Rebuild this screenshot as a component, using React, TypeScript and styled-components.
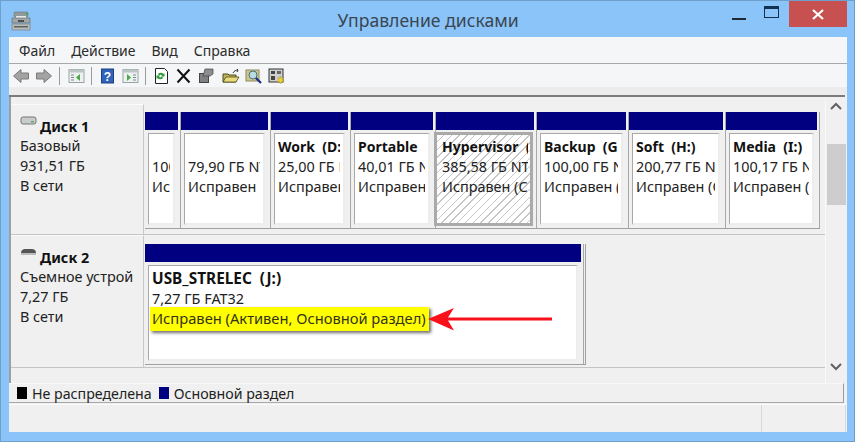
import React from "react";
import styled, { createGlobalStyle } from "styled-components";

const Global = createGlobalStyle`
  html, body { margin: 0; padding: 0; background: #8ac4f9; }
  * { box-sizing: border-box; }
`;

const Window = styled.div`
  width: 855px;
  height: 442px;
  overflow: hidden;
  background: #8ac4f9;
  border: 1px solid #6f9fcb;
  display: flex;
  flex-direction: column;
  font-family: "Noto Sans", "Open Sans", sans-serif;
  color: #222;
`;

const TitleBar = styled.div`
  height: 36px;
  flex: none;
  display: flex;
  padding-left: 10px;
`;

const AppIcon = styled.svg`
  width: 20px;
  height: 20px;
  margin-top: 10px;
  flex: none;
`;

const Title = styled.div`
  flex: 1;
  text-align: center;
  font-size: 17.6px;
  line-height: 38px;
  color: #3b4650;
  padding-left: 103px;
`;

const Controls = styled.div`
  display: flex;
  flex: none;
  margin-right: 7px;
`;

const ControlSlot = styled.div`
  width: 33px;
  height: 26px;
  display: flex;
  align-items: center;
  justify-content: center;
`;

const Minimize = styled.div`
  width: 14px;
  height: 2px;
  background: #1d2a36;
  margin-top: 10px;
`;

const Maximize = styled.div`
  width: 15px;
  height: 12px;
  border: 1px solid #12304f;
  border-top-width: 3px;
  margin-top: -4px;
`;

const Close = styled.div`
  width: 58px;
  height: 26px;
  margin-left: 1px;
  background: #c75050;
  display: flex;
  align-items: center;
  justify-content: center;
`;

const Client = styled.div`
  flex: 1;
  margin: 0 7px 9px 8px;
  background: #f0f0f0;
  display: flex;
  flex-direction: column;
  min-height: 0;
`;

const MenuBar = styled.div`
  height: 27px;
  flex: none;
  background: #f5f6f7;
  border-bottom: 1px solid #a8a8a8;
  display: flex;
  align-items: center;
  padding-left: 10px;
  gap: 16px;
  font-size: 14px;
  color: #2b2b2b;
`;

const MenuItem = styled.span`
  line-height: 27px;
`;

const Toolbar = styled.div`
  height: 23px;
  flex: none;
  background: #f5f6f7;
  display: flex;
  align-items: center;
  padding-left: 3px;
`;

const ToolIcon = styled.svg<{ $gap?: number }>`
  width: 18px;
  height: 16px;
  flex: none;
  margin-right: ${(p) => p.$gap ?? 5}px;
`;

const ToolSep = styled.div`
  width: 1px;
  height: 18px;
  background: #9a9a9a;
  margin: 0 8px 0 1px;
  flex: none;
`;

const Strip = styled.div`
  height: 8px;
  flex: none;
  background: #ececec;
`;

const HeaderLine = styled.div`
  height: 2px;
  flex: none;
  background: #7b7b7b;
  margin-right: 2px;
`;

const ListPane = styled.div`
  height: 286px;
  flex: none;
  display: flex;
  border-left: 2px solid #a0a0a0;
`;

const Rows = styled.div`
  flex: 1;
  min-width: 0;
  display: flex;
  flex-direction: column;
`;

const DiskRow = styled.div<{ $h: number; $pt: number }>`
  height: ${(p) => p.$h}px;
  flex: none;
  display: flex;
  padding-top: ${(p) => p.$pt}px;
  border-bottom: 1px solid #c4c4c4;
`;

const DiskLabel = styled.div<{ $lift: number }>`
  width: 133px;
  flex: none;
  margin-top: -${(p) => p.$lift}px;
  padding: 11px 0 0 9px;
  border-right: 1px solid #c8c8c8;
  border-top: 1px solid #fbfbfb;
  overflow: hidden;
  white-space: nowrap;
  font-size: 14.4px;
  line-height: 20px;
`;

const DiskHead = styled.div`
  display: flex;
  align-items: flex-start;
  height: 20px;
  font-weight: 700;
  font-size: 14.4px;
  color: #111;
`;

const DiskIcon = styled.svg`
  width: 17px;
  height: 12px;
  flex: none;
  margin: 0 3px 0 0;
`;

const DiskName = styled.span`
  margin-top: 1px;
`;

const Partitions = styled.div<{ $w: number; $h: number; $framed?: boolean }>`
  width: ${(p) => p.$w}px;
  height: ${(p) => p.$h}px;
  margin-left: 1px;
  flex: none;
  display: flex;
  border-bottom: 1px solid #a0a0a0;
  border-right: ${(p) => (p.$framed ? "1px solid #a0a0a0" : "none")};
`;

const Partition = styled.div<{ $w: number }>`
  width: ${(p) => p.$w}px;
  flex: none;
  padding-right: 3px;
  display: flex;
  flex-direction: column;
  border-right: 1px solid #a8a8a8;
`;

const PartBar = styled.div`
  height: 18px;
  flex: none;
  background: #000080;
  margin-right: -1px;
`;

const PartBody = styled.div<{ $selected?: boolean }>`
  flex: 1;
  margin: ${(p) => (p.$selected ? "2px 0 2px -2px" : "3px 2px 3px 3px")};
  padding: ${(p) => (p.$selected ? "2px 2px 0 5px" : "3px 3px 0 3px")};
  white-space: pre;
  overflow: hidden;
  font-size: 14.4px;
  line-height: 20px;
  background: ${(p) =>
    p.$selected
      ? "repeating-linear-gradient(135deg, #fff 0 4.5px, #c6c6c6 4.5px 5.5px)"
      : "#fff"};
  border-style: solid;
  border-color: ${(p) =>
    p.$selected ? "#aaa" : "#a8a8a8 #ededed #ededed #a8a8a8"};
  border-width: ${(p) => (p.$selected ? "3px" : "1px 2px 2px 1px")};
  position: relative;
`;

const PartClip = styled.div`
  overflow: hidden;
`;

const PartName = styled.div<{ $wide?: boolean }>`
  font-weight: 700;
  height: 20px;
  font-size: ${(p) => (p.$wide ? 15.4 : 14)}px;
  color: #111;
`;

const Highlight = styled.div`
  position: absolute;
  left: 1px;
  top: 41px;
  width: 279px;
  height: 24px;
  background: #ffff00;
  box-shadow: 2px 2px 3px rgba(60, 60, 60, 0.75);
  font-size: 14.7px;
  line-height: 23px;
  padding-left: 2px;
  color: #33331a;
`;

const Arrow = styled.svg`
  position: absolute;
  left: 279px;
  top: 41px;
  width: 126px;
  height: 24px;
`;

const Scroll = styled.div`
  width: 20px;
  flex: none;
  margin-right: 2px;
  margin-top: 3px;
  border-left: 1px solid #fafafa;
  display: flex;
  flex-direction: column;
  align-items: center;
`;

const ScrollBtn = styled.svg<{ $pt?: number }>`
  width: 12px;
  height: 9px;
  flex: none;
  margin-top: ${(p) => p.$pt ?? 0}px;
`;

const Thumb = styled.div`
  width: 19px;
  height: 61px;
  background: #cdcdcd;
  margin-top: 33px;
  margin-left: 1px;
  flex: none;
`;

const Legend = styled.div`
  height: 20px;
  flex: none;
  border-top: 1px solid #f8f8f8;
  border-bottom: 1px solid #a8a8a8;
  border-right: 1px solid #999;
  margin-right: 3px;
  display: flex;
  align-items: center;
  padding-left: 8px;
  font-size: 14.2px;
  color: #222;
`;

const LegendItem = styled.div`
  display: flex;
  align-items: center;
  margin-right: 7px;
  height: 19px;
  padding-top: 1px;
`;

const Swatch = styled.span<{ $c: string }>`
  width: 10px;
  height: 12px;
  background: ${(p) => p.$c};
  margin-right: 5px;
  margin-top: -2px;
  flex: none;
`;

const StatusBar = styled.div`
  flex: 1;
  border-top: 1px solid #fbfbfb;
  margin-top: 1px;
  display: flex;
  justify-content: flex-end;
`;

const StatusCell = styled.div`
  width: 85px;
  height: 100%;
  border-left: 1px solid #d8d8d8;
  border-right: 1px solid #d8d8d8;
  margin-right: 1px;
`;

const BackIcon = ({ flip }: { flip?: boolean }) => (
  <ToolIcon viewBox="0 0 18 16" $gap={5}>
    <path
      d={flip ? "M1.500 5h7.500V1.500l7.500 6.500-7.500 6.500V11H1.500z" : "M16.500 5H9V1.500L1.500 8 9 14.500V11h7.500z"}
      fill="#a3a3a3"
      stroke="#7a7a7a"
    />
  </ToolIcon>
);

const PaneIcon = ({ right, gap }: { right?: boolean; gap?: number }) => (
  <ToolIcon viewBox="0 0 18 16" $gap={gap}>
    <rect x="1" y="1.500" width="15" height="13" fill="#eef1f1" stroke="#9aa4a4" />
    <rect x="1" y="1.500" width="15" height="3" fill="#bcc6c6" />
    <rect x={right ? 11 : 3} y="6.500" width="3" height="1" fill="#7a8a8a" />
    <rect x={right ? 11 : 3} y="9" width="3" height="1" fill="#7a8a8a" />
    <rect x={right ? 11 : 3} y="11.500" width="3" height="1" fill="#7a8a8a" />
    <path d={right ? "M5 6l4 3.500L5 13z" : "M12 6L8 9.500l4 3.500z"} fill="#4aa84a" />
  </ToolIcon>
);

export default function App() {
  const cells: { w: number; name?: string; size: string; st: string; sel?: boolean }[] = [
    { w: 36, size: "100 МБ NTFS", st: "Исправен" },
    { w: 90, size: "79,90 ГБ NTFS", st: "Исправен" },
    { w: 80, name: "Work  (D:)", size: "25,00 ГБ NTFS", st: "Исправен (Основной)" },
    { w: 85, name: "Portable  (E:)", size: "40,01 ГБ NTFS", st: "Исправен (Основной)" },
    { w: 101, name: "Hypervisor  (F:)", size: "385,58 ГБ NTFS", st: "Исправен (Система)", sel: true },
    { w: 92, name: "Backup  (G:)", size: "100,00 ГБ NTFS", st: "Исправен (Основной)" },
    { w: 97, name: "Soft  (H:)", size: "200,77 ГБ NTFS", st: "Исправен (Основной)" },
    { w: 94, name: "Media  (I:)", size: "100,17 ГБ NTFS", st: "Исправен (Основной)" },
  ];
  return (
    <>
      <Global />
      <Window>
        <TitleBar>
          <AppIcon viewBox="0 0 20 20">
            <rect x="3" y="1" width="14" height="5" rx="1" fill="#8f9a9c" stroke="#6e7678" strokeWidth=".6" />
            <rect x="5" y="5" width="10" height="2" fill="#e8eaea" />
            <rect x="15" y="2" width="2" height="2" fill="#3faa55" />
            <rect x="1" y="7" width="18" height="5" fill="#9ea6a8" stroke="#666" strokeWidth=".6" />
            <rect x="7" y="9" width="6" height="2" fill="#4a4f50" />
            <rect x="1" y="13" width="18" height="6" fill="#b6bcbd" stroke="#777" strokeWidth=".6" />
            <rect x="3" y="15" width="14" height="1.500" fill="#5c6263" />
          </AppIcon>
          <Title>Управление дисками</Title>
          <Controls>
            <ControlSlot><Minimize /></ControlSlot>
            <ControlSlot><Maximize /></ControlSlot>
            <Close>
              <svg width="12" height="11" viewBox="0 0 12 11">
                <path d="M1 1l10 9M11 1L1 10" stroke="#fff" strokeWidth="2.200" />
              </svg>
            </Close>
          </Controls>
        </TitleBar>
        <Client>
          <MenuBar>
            <MenuItem>Файл</MenuItem>
            <MenuItem>Действие</MenuItem>
            <MenuItem>Вид</MenuItem>
            <MenuItem>Справка</MenuItem>
          </MenuBar>
          <Toolbar>
            <BackIcon />
            <BackIcon flip />
            <ToolSep />
            <PaneIcon gap={4} />
            <ToolSep />
            <ToolIcon viewBox="0 0 18 16" $gap={4}>
              <rect x="1.500" y="1" width="12" height="14" fill="#2f62b8" stroke="#1c3f86" />
              <text x="7.500" y="12.500" textAnchor="middle" fontSize="12" fontWeight="700" fill="#fff" fontFamily="Liberation Sans, sans-serif">?</text>
            </ToolIcon>
            <PaneIcon right gap={4} />
            <ToolSep />
            <ToolIcon viewBox="0 0 18 16" $gap={3}>
              <path d="M1.500.5h9l3 3v12h-12z" fill="#fff" stroke="#222" />
              <path d="M4 6a3.500 3.500 0 0 1 5.500 0l1-1v3.500H7l1-1a2 2 0 0 0-3 0zM9 10a3.500 3.500 0 0 1-5.500 0l-1 1V7.500H6l-1 1a2 2 0 0 0 3 0z" fill="#2f9a3a" />
            </ToolIcon>
            <ToolIcon viewBox="0 0 18 16" $gap={3}>
              <path d="M2.500 1.500l12 13M14.500 1.500l-12 13" stroke="#111" strokeWidth="2" />
            </ToolIcon>
            <ToolIcon viewBox="0 0 18 16" $gap={8}>
              <rect x="3" y="5" width="10" height="10" fill="#444" />
              <path d="M4 7h8M4 9h8M4 11h8M4 13h8" stroke="#ddd" strokeWidth=".8" />
              <path d="M9 1h8v5l-3 2H7z" fill="#8e8e8e" stroke="#444" strokeWidth=".7" />
            </ToolIcon>
            <ToolIcon viewBox="0 0 18 16">
              <path d="M1 6h5l1 1h7v7H1z" fill="#bdb55a" stroke="#4c4a20" />
              <path d="M4 9h13l-3 5H1z" fill="#e9dc7c" stroke="#4c4a20" strokeWidth=".8" />
              <path d="M11 5c1-2 3-3 5-3l-1-1M16 2l-1 2" stroke="#333" fill="none" />
            </ToolIcon>
            <ToolIcon viewBox="0 0 18 16">
              <rect x="1" y="2" width="13" height="11" fill="#cfc68c" stroke="#8a8a60" />
              <circle cx="8" cy="7" r="4" fill="#b8dbe0" stroke="#4a7080" />
              <path d="M11 10l5 5" stroke="#1c2c8a" strokeWidth="2.200" />
            </ToolIcon>
            <ToolIcon viewBox="0 0 18 16">
              <rect x="1" y="1" width="14" height="13" fill="#cfcfcf" stroke="#333" />
              <rect x="3" y="3" width="4" height="3" fill="#444" />
              <rect x="9" y="3" width="4" height="3" fill="#666" />
              <rect x="3" y="8" width="4" height="4" fill="#444" />
              <path d="M12 8l1.200 2.300 2.600-.6-1.300 2.300 1.800 1.800-2.600-.1-1.100 2.200-1.100-2.200-2.600.1 1.800-1.800-1.300-2.300 2.600.6z" fill="#f2d335" stroke="#9a8520" strokeWidth=".4" />
            </ToolIcon>
          </Toolbar>
          <Strip />
          <HeaderLine />
          <ListPane>
            <Rows>
              <DiskRow $h={138} $pt={15}>
                <DiskLabel $lift={8}>
                  <DiskHead>
                    <DiskIcon viewBox="0 0 17 12">
                      <rect x="1" y="1" width="15" height="7" rx="2" fill="#c9cccc" stroke="#777" />
                      <rect x="11" y="5" width="3" height="1.400" fill="#5aa85a" />
                    </DiskIcon>
                    <DiskName>Диск 1</DiskName>
                  </DiskHead>
                  <div>Базовый</div>
                  <div>931,51 ГБ</div>
                  <div>В сети</div>
                </DiskLabel>
                <Partitions $w={675} $h={117}>
                  {cells.map((c, i) => (
                    <Partition key={i} $w={c.w}>
                      <PartBar />
                      <PartBody $selected={c.sel}>
                        <PartClip>
                          <PartName>{c.name ?? "\u00a0"}</PartName>
                          <div>{c.size}</div>
                          <div>{c.st}</div>
                        </PartClip>
                      </PartBody>
                    </Partition>
                  ))}
                </Partitions>
              </DiskRow>
              <DiskRow $h={133} $pt={9}>
                <DiskLabel $lift={9}>
                  <DiskHead>
                    <DiskIcon viewBox="0 0 17 12">
                      <path d="M1 6c0-3 2-4 4-4h7c2 0 4 1 4 4z" fill="#555" />
                      <rect x="1" y="6" width="15" height="2" fill="#bbb" />
                    </DiskIcon>
                    <DiskName>Диск 2</DiskName>
                  </DiskHead>
                  <div>Съемное устрой</div>
                  <div>7,27 ГБ</div>
                  <div>В сети</div>
                </DiskLabel>
                <Partitions $w={441} $h={121} $framed>
                  <Partition $w={439}>
                    <PartBar />
                    <PartBody>
                      <PartName $wide>USB_STRELEC  (J:)</PartName>
                      <div>7,27 ГБ FAT32</div>
                      <Highlight>Исправен (Активен, Основной раздел)</Highlight>
                      <Arrow viewBox="0 0 126 24">
                        <path d="M0 12L26 1l-6 9.500H124v3H20l6 10z" fill="#f8101a" />
                      </Arrow>
                    </PartBody>
                  </Partition>
                </Partitions>
              </DiskRow>
            </Rows>
            <Scroll>
              <ScrollBtn viewBox="0 0 12 9" $pt={2}>
                <path d="M1 7l5-5 5 5" fill="none" stroke="#606060" strokeWidth="2" />
              </ScrollBtn>
              <Thumb />
              <ScrollBtn viewBox="0 0 12 9" $pt={157}>
                <path d="M1 2l5 5 5-5" fill="none" stroke="#606060" strokeWidth="2" />
              </ScrollBtn>
            </Scroll>
          </ListPane>
          <Legend>
            <LegendItem><Swatch $c="#000" />Не распределена</LegendItem>
            <LegendItem><Swatch $c="#000080" />Основной раздел</LegendItem>
          </Legend>
          <StatusBar>
            <StatusCell />
          </StatusBar>
        </Client>
      </Window>
    </>
  );
}
